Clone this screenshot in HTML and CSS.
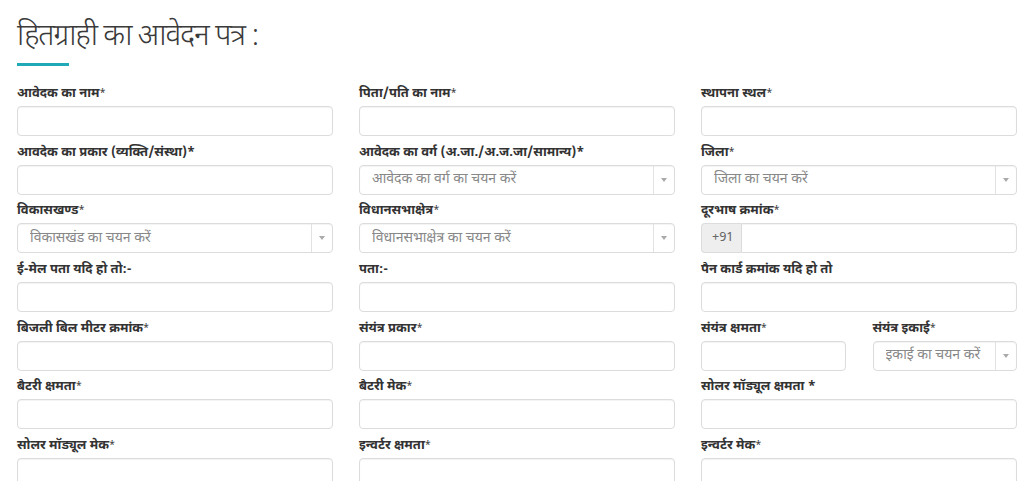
FILE: index.html
```html
<!DOCTYPE html>
<html lang="hi">
<head>
    <meta charset="UTF-8">
    <meta name="viewport" content="width=device-width, initial-scale=1.0">
    <title>हितग्राही का आवेदन पत्र</title>
    <link rel="stylesheet" href="styles.css">
</head>
<body>
    <div class="page">
        <h1 class="page-title">हितग्राही का आवेदन पत्र :</h1>
        <div class="title-bar"></div>

        <form class="form-grid">
            <div class="field">
                <label>आवेदक का नाम<span class="req">*</span></label>
                <input type="text" class="form-control">
            </div>
            <div class="field">
                <label>पिता/पति का नाम<span class="req">*</span></label>
                <input type="text" class="form-control">
            </div>
            <div class="field">
                <label>स्थापना स्थल<span class="req">*</span></label>
                <input type="text" class="form-control">
            </div>

            <div class="field">
                <label>आवदेक का प्रकार (व्यक्ति/संस्था)*</label>
                <input type="text" class="form-control">
            </div>
            <div class="field">
                <label>आवेदक का वर्ग (अ.जा./अ.ज.जा/सामान्य)*</label>
                <div class="select-wrap">
                    <select class="form-control"><option>आवेदक का वर्ग का चयन करें</option></select>
                </div>
            </div>
            <div class="field">
                <label>जिला<span class="req">*</span></label>
                <div class="select-wrap">
                    <select class="form-control"><option>जिला का चयन करें</option></select>
                </div>
            </div>

            <div class="field">
                <label>विकासखण्ड<span class="req">*</span></label>
                <div class="select-wrap">
                    <select class="form-control"><option>विकासखंड का चयन करें</option></select>
                </div>
            </div>
            <div class="field">
                <label>विधानसभाक्षेत्र<span class="req">*</span></label>
                <div class="select-wrap">
                    <select class="form-control"><option>विधानसभाक्षेत्र का चयन करें</option></select>
                </div>
            </div>
            <div class="field">
                <label>दूरभाष क्रमांक<span class="req">*</span></label>
                <div class="input-group">
                    <span class="addon">+91</span>
                    <input type="text" class="form-control">
                </div>
            </div>

            <div class="field">
                <label>ई-मेल पता यदि हो तो:-</label>
                <input type="text" class="form-control">
            </div>
            <div class="field">
                <label>पता:-</label>
                <input type="text" class="form-control">
            </div>
            <div class="field">
                <label>पैन कार्ड क्रमांक यदि हो तो</label>
                <input type="text" class="form-control">
            </div>

            <div class="field">
                <label>बिजली बिल मीटर क्रमांक<span class="req">*</span></label>
                <input type="text" class="form-control">
            </div>
            <div class="field">
                <label>संयंत्र प्रकार<span class="req">*</span></label>
                <input type="text" class="form-control">
            </div>
            <div class="field-pair">
                <div class="field">
                    <label>संयंत्र क्षमता<span class="req">*</span></label>
                    <input type="text" class="form-control">
                </div>
                <div class="field">
                    <label>संयंत्र इकाई<span class="req">*</span></label>
                    <div class="select-wrap">
                        <select class="form-control"><option>इकाई का चयन करें</option></select>
                    </div>
                </div>
            </div>

            <div class="field">
                <label>बैटरी क्षमता<span class="req">*</span></label>
                <input type="text" class="form-control">
            </div>
            <div class="field">
                <label>बैटरी मेक<span class="req">*</span></label>
                <input type="text" class="form-control">
            </div>
            <div class="field">
                <label>सोलर मॉड्यूल क्षमता *</label>
                <input type="text" class="form-control">
            </div>

            <div class="field">
                <label>सोलर मॉड्यूल मेक<span class="req">*</span></label>
                <input type="text" class="form-control">
            </div>
            <div class="field">
                <label>इन्वर्टर क्षमता<span class="req">*</span></label>
                <input type="text" class="form-control">
            </div>
            <div class="field">
                <label>इन्वर्टर मेक<span class="req">*</span></label>
                <input type="text" class="form-control">
            </div>
        </form>
    </div>
</body>
</html>
```

FILE: styles.css
```css
* {
    margin: 0;
    padding: 0;
    box-sizing: border-box;
}

body {
    font-family: "Noto Sans Devanagari", "Noto Sans", Arial, sans-serif;
    background: #fff;
    color: #333;
}

.page {
    padding: 18px 0 0 17px;
}

.page-title {
    font-size: 30px;
    font-weight: 300;
    line-height: 40px;
    letter-spacing: -1.2px;
    color: #3a3a3a;
}

.title-bar {
    width: 52px;
    height: 3px;
    margin-top: 5px;
    background: #20a9b6;
}

.form-grid {
    display: grid;
    grid-template-columns: repeat(3, 316px);
    column-gap: 26px;
    row-gap: 3.7px;
    margin-top: 15px;
}

.field-pair {
    display: grid;
    grid-template-columns: 1fr 1fr;
    column-gap: 27px;
}

label {
    display: block;
    height: 23px;
    padding-top: 3px;
    margin-bottom: 2px;
    font-size: 13px;
    font-weight: bold;
    line-height: 20px;
    color: #333;
    white-space: nowrap;
}

.req {
    font-size: 10px;
    font-weight: normal;
    vertical-align: top;
}

.form-control {
    display: block;
    width: 100%;
    height: 30px;
    padding: 0 12px;
    border: 1px solid #dcdcdc;
    border-radius: 4px;
    background: #fff;
    box-shadow: inset 0 1px 1px rgba(0, 0, 0, 0.05);
    font-family: inherit;
    font-size: 14px;
    color: #888;
}

select.form-control {
    appearance: none;
    -webkit-appearance: none;
    padding-right: 26px;
}

.select-wrap {
    position: relative;
}

/* select2 style arrow box */
.select-wrap::after {
    content: "";
    position: absolute;
    top: 1px;
    right: 1px;
    bottom: 1px;
    width: 20px;
    border-left: 1px solid #e2e2e2;
}

.select-wrap::before {
    content: "";
    position: absolute;
    top: 13px;
    right: 8px;
    border-left: 3px solid transparent;
    border-right: 3px solid transparent;
    border-top: 4px solid #aaa;
    z-index: 1;
}

.input-group {
    display: flex;
}

.input-group .addon {
    width: 44px;
    height: 30px;
    line-height: 28px;
    padding-left: 10px;
    border: 1px solid #dcdcdc;
    border-right: none;
    border-radius: 4px 0 0 4px;
    background: #eee;
    font-size: 13px;
    color: #666;
}

.input-group .form-control {
    border-radius: 0 4px 4px 0;
}
```
